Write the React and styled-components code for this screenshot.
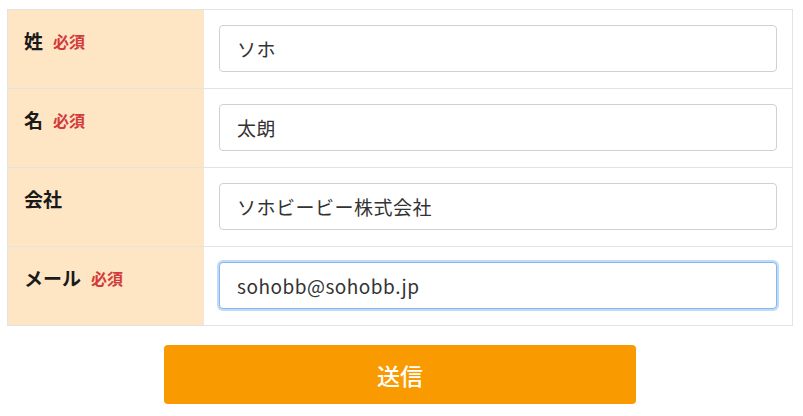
import React from 'react';
import styled, { createGlobalStyle } from 'styled-components';

const GlobalStyle = createGlobalStyle`
    body {
        margin: 0;
        background: #fff;
        font-family: 'Noto Sans CJK JP', 'Noto Sans', sans-serif;
    }
`;

const Page = styled.div`
    padding: 9px 10px 0 7px;
    display: flex;
    flex-direction: column;
    align-items: center;
`;

const Table = styled.div`
    width: 786px;
    border: 1px solid #e3e3e3;
    border-bottom: none;
    box-sizing: border-box;
`;

const Row = styled.div`
    display: grid;
    grid-template-columns: 196px 1fr;
    height: 78px;
    border-bottom: 1px solid #e3e3e3;
`;

const LabelCell = styled.div`
    background: #fee6c5;
    border-right: 1px solid #f3e6d4;
    padding: 18px 0 0 16px;
    display: flex;
    align-items: center;
    align-content: flex-start;
    flex-wrap: wrap;
    gap: 10px;
    color: #1a1a1a;
    font-weight: 700;
    font-size: 19px;
    line-height: 26px;
`;

const Required = styled.span`
    color: #d33a3a;
    font-size: 16px;
    font-weight: 700;
    line-height: 26px;
`;

const FieldCell = styled.div`
    display: flex;
    align-items: center;
    padding: 0 15px;
`;

const Input = styled.input`
    width: 100%;
    height: 47px;
    margin-top: -1px;
    box-sizing: border-box;
    border: 1px solid ${(p) => (p.$focused ? '#86b7ee' : '#d0d0d0')};
    border-radius: 4px;
    padding: 0 17px;
    font-family: 'Noto Sans CJK JP', 'Noto Sans', sans-serif;
    font-size: 19px;
    letter-spacing: 0.5px;
    color: #333;
    outline: none;
    box-shadow: ${(p) => (p.$focused ? '0 0 0 2px rgba(150, 195, 245, 0.6)' : 'none')};
`;

const SubmitButton = styled.button`
    margin-top: 19px;
    width: 472px;
    height: 59px;
    border: none;
    border-radius: 4px;
    background: #f89a00;
    color: #fff;
    font-family: 'Noto Sans CJK JP', 'Noto Sans', sans-serif;
    font-size: 23px;
    font-weight: 500;
    cursor: pointer;
`;

const fields = [
    { label: '姓', required: true, value: 'ソホ' },
    { label: '名', required: true, value: '太朗' },
    { label: '会社', required: false, value: 'ソホビービー株式会社' },
    { label: 'メール', required: true, value: 'sohobb@sohobb.jp', focused: true },
];

function App() {
    return (
        <>
            <GlobalStyle />
            <Page>
                <Table>
                    {fields.map((f) => (
                        <Row key={f.label}>
                            <LabelCell>
                                <span>{f.label}</span>
                                {f.required && <Required>必須</Required>}
                            </LabelCell>
                            <FieldCell>
                                <Input defaultValue={f.value} $focused={f.focused} />
                            </FieldCell>
                        </Row>
                    ))}
                </Table>
                <SubmitButton>送信</SubmitButton>
            </Page>
        </>
    );
}

export default App;
